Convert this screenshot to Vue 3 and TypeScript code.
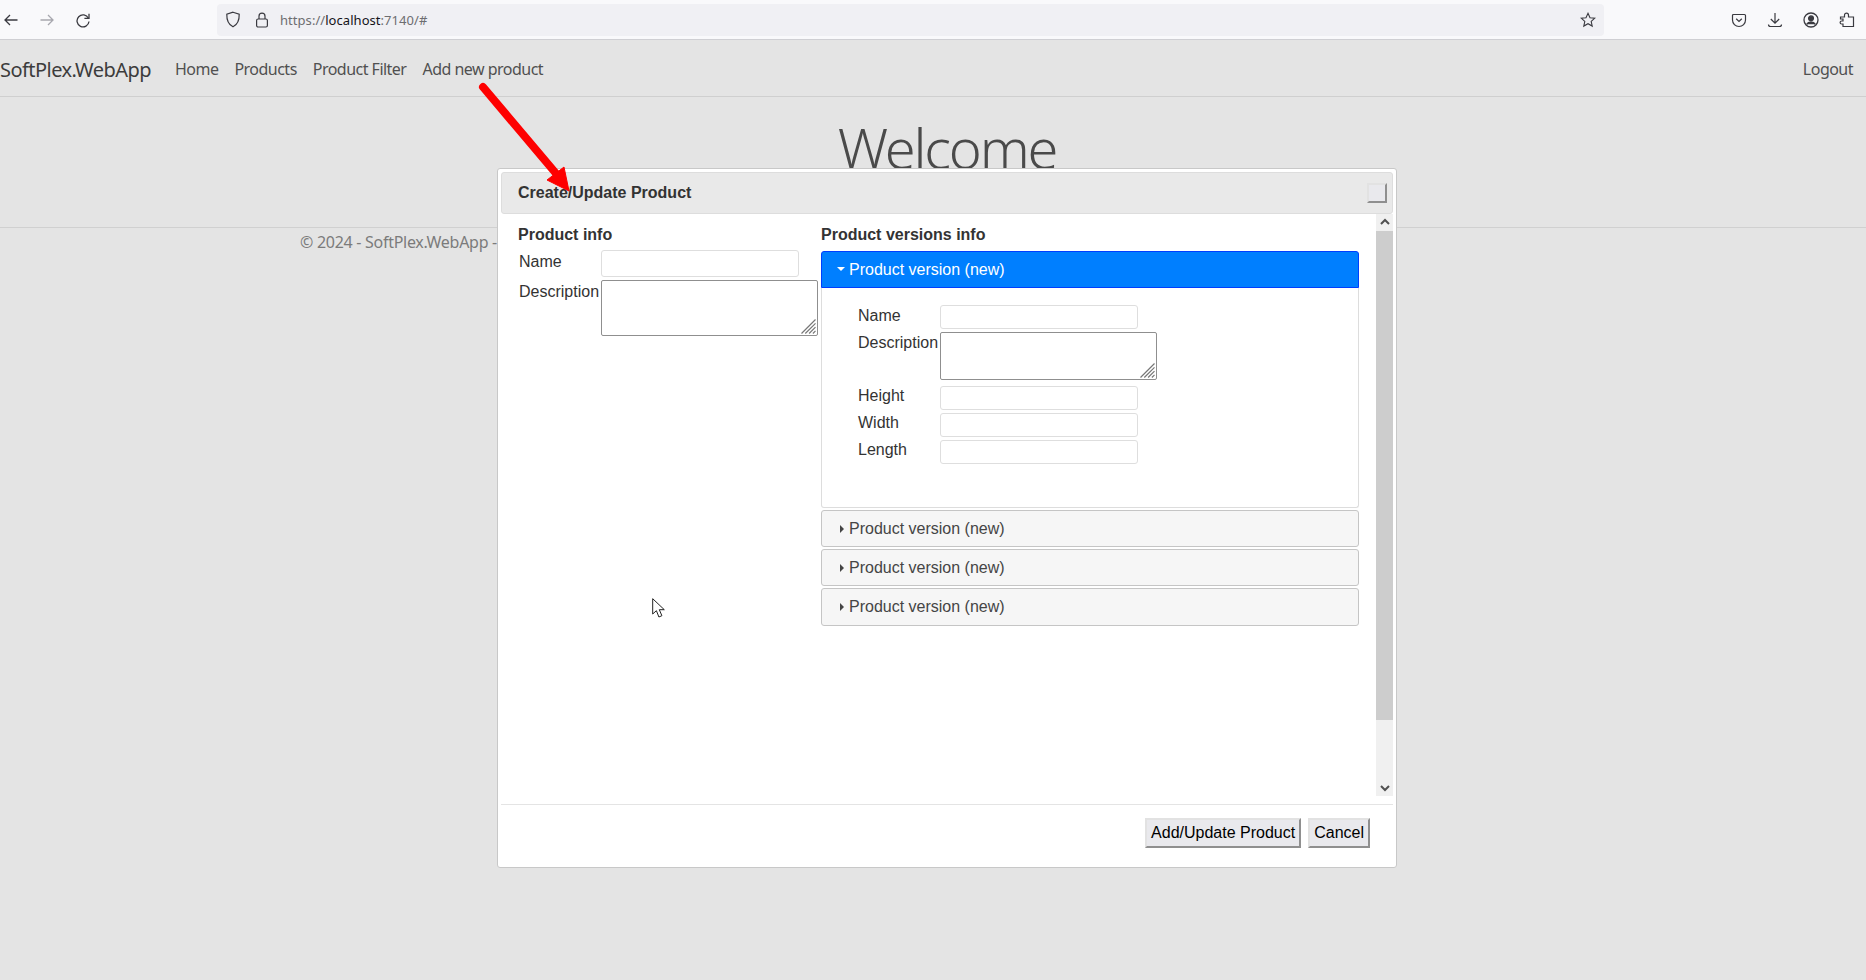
<script setup lang="ts">
const navLinks: string[] = ['Home', 'Products', 'Product Filter', 'Add new product']
const panelFields: { label: string; area?: boolean; low?: boolean }[] = [
  { label: 'Name' },
  { label: 'Description', area: true },
  { label: 'Height', low: true },
  { label: 'Width', low: true },
  { label: 'Length', low: true },
]
</script>

<template>
  <div class="page">
    <header class="chrome">
      <div class="nav-icons">
        <svg width="16" height="16" viewBox="0 0 16 16" fill="none" stroke="#3a3a40" stroke-width="1.3"><path d="M14.5 8H2M7 3 2 8l5 5" /></svg>
        <svg width="16" height="16" viewBox="0 0 16 16" fill="none" stroke="#a8a8ae" stroke-width="1.3"><path d="M1.5 8H14M9 3l5 5-5 5" /></svg>
        <svg width="16" height="16" viewBox="0 0 16 16" fill="none" stroke="#3a3a40" stroke-width="1.3"><path d="M13.4 6.2A6 6 0 1 0 14 9.5" /><path d="M14 1.8v4.6H9.4" /></svg>
      </div>
      <div class="urlbar">
        <svg width="16" height="17" viewBox="0 0 16 17" fill="none" stroke="#3a3a40" stroke-width="1.2"><path d="M8 1.2 14.2 3.2c.2 6-1.6 10.2-6.2 12.6C3.400 13.400 1.600 9.200 1.800 3.200Z" /></svg>
        <svg class="lock" width="14" height="16" viewBox="0 0 14 16" fill="none" stroke="#3a3a40" stroke-width="1.2"><rect x="1.600" y="7" width="10.800" height="8" rx="1.500" /><path d="M4 7V4.200a3 3 0 0 1 6 0V7" /></svg>
        <span class="url"><span class="dim">https://</span>localhost<span class="dim">:7140/#</span></span>
        <svg class="star" width="16" height="16" viewBox="0 0 16 16" fill="none" stroke="#3a3a40" stroke-width="1.100"><path d="m8 1.300 2 4.400 4.800.5-3.600 3.200 1 4.700L8 11.700l-4.200 2.400 1-4.700L1.200 6.200 6 5.700Z" /></svg>
      </div>
      <div class="tool-icons">
        <svg width="16" height="16" viewBox="0 0 16 16" fill="none" stroke="#3a3a40" stroke-width="1.200"><path d="M2.500 2.500h11a1 1 0 0 1 1 1V8a6.500 6.500 0 0 1-13 0V3.500a1 1 0 0 1 1-1Z" /><path d="m5.200 6.800 2.800 2.700 2.800-2.700" /></svg>
        <svg width="16" height="16" viewBox="0 0 16 16" fill="none" stroke="#3a3a40" stroke-width="1.200"><path d="M8 1v10M3.800 7 8 11.200 12.200 7M1.500 12.500c0 1.300.7 2 2 2h9c1.300 0 2-.7 2-2" /></svg>
        <svg width="16" height="16" viewBox="0 0 16 16" fill="none" stroke="#3a3a40" stroke-width="1.300"><circle cx="8" cy="8" r="7" /><circle cx="8" cy="6.300" r="2.400" fill="#3a3a40" /><path d="M3.600 12.300c1-1.700 2.600-2.300 4.400-2.300s3.400.6 4.400 2.300" fill="#3a3a40" /></svg>
        <svg width="16" height="16" viewBox="0 0 16 16" fill="none" stroke="#3a3a40" stroke-width="1.200"><path d="M1.500 5h4V3.200a2 2 0 0 1 4 0V5h5v9.500H4V12H2.600a1.500 1.500 0 0 1 0-3H4V7H1.500Z" /></svg>
      </div>
    </header>

    <nav class="navbar">
      <span class="brand">SoftPlex.WebApp</span>
      <a v-for="link in navLinks" :key="link" class="nav-link">{{ link }}</a>
      <a class="nav-link logout">Logout</a>
    </nav>

    <main class="main">
      <h1 class="welcome">Welcome</h1>
    </main>

    <footer class="page-footer">© 2024 - SoftPlex.WebApp -</footer>

    <section class="dialog">
      <div class="dialog-title">
        <span>Create/Update Product</span>
        <button class="close" type="button" aria-label="Close"></button>
      </div>

      <div class="dialog-body">
        <div class="scroll-content">
          <div class="col-left">
            <h3 class="heading">Product info</h3>
            <div class="form form-left">
              <label class="lbl">Name</label>
              <input class="text" type="text" />
              <label class="lbl">Description</label>
              <div class="area-wrap">
                <textarea class="area"></textarea>
                <svg class="grip" width="15" height="15" viewBox="0 0 15 15" stroke="#777" stroke-width="1.200"><path d="M.5 14.500 14.500.5M4.300 14.500 14.500 4.300M8.100 14.500 14.500 8.100M11.900 14.500l2.600-2.600" /></svg>
              </div>
            </div>
          </div>

          <div class="col-right">
            <h3 class="heading">Product versions info</h3>
            <div class="acc-head active"><i class="caret-down"></i>Product version (new)</div>
            <div class="acc-panel">
              <div class="form form-panel">
                <template v-for="f in panelFields" :key="f.label">
                  <label class="lbl" :class="{ low: f.low }">{{ f.label }}</label>
                  <div v-if="f.area" class="area-wrap area-panel">
                    <textarea class="area"></textarea>
                    <svg class="grip" width="15" height="15" viewBox="0 0 15 15" stroke="#777" stroke-width="1.200"><path d="M.5 14.500 14.500.5M4.300 14.500 14.500 4.300M8.100 14.500 14.500 8.100M11.900 14.500l2.600-2.600" /></svg>
                  </div>
                  <input v-else class="text" type="text" />
                </template>
              </div>
            </div>
            <div v-for="n in 3" :key="n" class="acc-head"><i class="caret-right"></i>Product version (new)</div>
          </div>
        </div>

        <div class="scrollbar">
          <svg class="sb-arrow sb-up" width="10" height="7" viewBox="0 0 10 7" fill="none" stroke="#505050" stroke-width="2"><path d="m1 6 4-4 4 4" /></svg>
          <div class="sb-thumb"></div>
          <svg class="sb-arrow sb-down" width="10" height="7" viewBox="0 0 10 7" fill="none" stroke="#505050" stroke-width="2"><path d="m1 1 4 4 4-4" /></svg>
        </div>
      </div>

      <div class="dialog-actions">
        <button class="btn" type="button">Add/Update Product</button>
        <button class="btn" type="button">Cancel</button>
      </div>
    </section>

    <svg class="arrow" width="100" height="116" viewBox="0 0 100 116">
      <path d="M6 7 82 97" stroke="#fe0000" stroke-width="8" stroke-linecap="round" fill="none" />
      <path d="M92 111 87 87 70 100Z" fill="#fe0000" stroke="#fe0000" />
    </svg>

    <svg class="cursor" width="14" height="21" viewBox="0 0 14 21">
      <path d="M.7.700V16l3.700-3.300 2.500 6.300 3-1.300-2.600-6h5Z" fill="#fff" stroke="#222" stroke-width="1" stroke-linejoin="round" />
    </svg>
  </div>
</template>

<style>
html, body { margin: 0; background: #e4e4e4; }
</style>

<style scoped>
.page {
  position: relative;
  width: 1866px;
  height: 980px;
  overflow: hidden;
  background: #e4e4e4;
  font-family: "Noto Sans", sans-serif;
  font-size: 16px;
}
.chrome {
  display: flex;
  align-items: center;
  height: 39px;
  background: #f9f9fb;
  border-bottom: 1px solid #cfcfd3;
  box-sizing: content-box;
}
.nav-icons { display: flex; gap: 20px; padding-left: 3px; width: 217px; box-sizing: border-box; }
.urlbar {
  display: flex;
  align-items: center;
  width: 1387px;
  height: 32px;
  background: #f0f0f4;
  border-radius: 4px;
  padding-left: 8px;
  padding-right: 8px;
  box-sizing: border-box;
}
.lock { margin-left: 14px; }
.url { margin-left: 11px; font-size: 13px; color: #15141a; letter-spacing: 0.05px; }
.dim { color: #6d6d70; }
.star { margin-left: auto; }
.tool-icons { display: flex; gap: 20px; margin-left: auto; padding-right: 11px; }

.navbar {
  display: flex;
  align-items: center;
  padding-top: 2px;
  box-sizing: border-box;
  height: 57px;
  border-bottom: 1px solid #cfcfcf;
}
.brand { font-size: 20px; color: #3c3c3c; margin-right: 16px; letter-spacing: -0.55px; }
.nav-link { padding: 0 8px; color: #505050; letter-spacing: -0.52px; }
.logout { margin-left: auto; margin-right: 5px; }

.main { height: 131px; padding-left: 28px; text-align: center; border-bottom: 1px solid #d0d0d0; box-sizing: border-box; }
.welcome {
  margin: 0;
  padding-top: 17px;
  font-size: 56px;
  line-height: 67px;
  font-weight: 300;
  color: #4a4a4a;
  letter-spacing: -2.2px;
}
.page-footer { padding: 2px 0 0 300px; color: #7b7b7b; letter-spacing: -0.28px; line-height: 24px; }

.dialog {
  position: absolute;
  left: 497px;
  top: 168px;
  width: 900px;
  height: 700px;
  box-sizing: border-box;
  display: flex;
  flex-direction: column;
  padding: 3px;
  background: #fff;
  border: 1px solid #c8c8c8;
  border-radius: 3px;
  font-family: "Liberation Sans", Arial, sans-serif;
  color: #333;
}
.dialog-title {
  display: flex;
  align-items: center;
  justify-content: space-between;
  height: 42px;
  flex: none;
  box-sizing: border-box;
  padding: 0 5px 0 16px;
  background: #e9e9e9;
  border: 1px solid #ddd;
  border-radius: 3px;
  font-weight: 700;
}
.close {
  width: 20px;
  height: 20px;
  padding: 0;
  background: #e9e9ed;
  border: 2px solid;
  border-color: #e2e2e2 #8f8f8f #8f8f8f #e2e2e2;
}
.dialog-body { display: flex; height: 582px; flex: none; margin-bottom: 8px; }
.scroll-content {
  flex: 1;
  display: grid;
  grid-template-columns: 303px 538px;
  align-content: start;
  padding: 12px 17px 0;
}
.heading { margin: 0; font-size: 16px; line-height: 18px; font-weight: 700; }
.form { display: grid; align-items: start; }
.form-left { grid-template-columns: 82px 217px; margin: 6px 0 0 1px; row-gap: 3px; }
.form-panel { grid-template-columns: 82px 217px; row-gap: 3px; }
.lbl { line-height: 18px; padding-top: 2px; }
.form-left .lbl { padding-top: 3px; }
.lbl.low { padding-top: 1px; }
.text {
  width: 198px;
  box-sizing: border-box;
  background: #fff;
  border: 1px solid #dedede;
  border-radius: 3px;
  padding: 0;
  margin: 0;
  outline: none;
}
.form-left .text { height: 27px; }
.form-panel .text { height: 24px; }
.area-wrap { position: relative; width: 217px; height: 56px; }
.area-panel { height: 48px; margin-bottom: 3px; }
.area {
  display: block;
  width: 100%;
  height: 100%;
  box-sizing: border-box;
  margin: 0;
  padding: 0;
  background: #fff;
  border: 1px solid #8f8f8f;
  border-radius: 2px;
  resize: none;
  outline: none;
}
.grip { position: absolute; right: 2px; bottom: 2px; }

.col-right .heading { margin-bottom: 7px; }
.acc-head {
  display: flex;
  align-items: center;
  height: 37px;
  box-sizing: border-box;
  margin-top: 2px;
  padding-left: 27px;
  position: relative;
  background: #f6f6f6;
  border: 1px solid #c5c5c5;
  border-radius: 3px;
  color: #454545;
}
.acc-head:last-child { height: 38px; }
.acc-head.active {
  margin-top: 0;
  background: #007fff;
  border-color: #003eff;
  border-radius: 3px 3px 0 0;
  color: #fff;
}
.caret-down, .caret-right { position: absolute; width: 0; height: 0; border-style: solid; }
.caret-down { left: 15px; top: 15px; border-width: 4px 4px 0; border-color: #fff transparent transparent; }
.caret-right { left: 18px; top: 14px; border-width: 4px 0 4px 4px; border-color: transparent transparent transparent #444; }
.acc-panel {
  height: 220px;
  margin-bottom: 1px;
  box-sizing: border-box;
  padding: 17px 0 0 36px;
  border: 1px solid #ddd;
  border-top: 0;
  border-radius: 0 0 3px 3px;
}

.scrollbar {
  flex: none;
  width: 17px;
  display: flex;
  flex-direction: column;
  align-items: center;
  background: #f0f0f0;
}
.sb-arrow { flex: none; }
.sb-up { margin: 4px 0 6px; }
.sb-thumb { width: 100%; height: 489px; background: #cdcdcd; }
.sb-down { margin: auto 0 4px; }

.dialog-actions {
  display: flex;
  justify-content: flex-end;
  gap: 7px;
  padding: 13px 23px 0 0;
  border-top: 1px solid #e4e4e4;
}
.btn {
  height: 30px;
  padding: 0 4px;
  box-sizing: border-box;
  background: #e9e9ed;
  border: 2px solid;
  border-color: #e2e2e2 #8f8f8f #8f8f8f #e2e2e2;
  font-family: "Liberation Sans", Arial, sans-serif;
  font-size: 16px;
  color: #000;
}
.arrow { position: absolute; left: 477px; top: 80px; overflow: visible; }
.cursor { position: absolute; left: 652px; top: 598px; }
</style>
